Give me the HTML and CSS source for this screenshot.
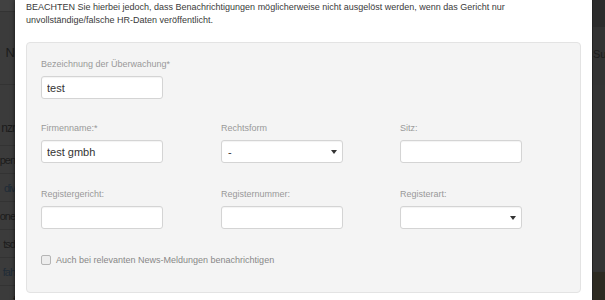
FILE: index.html
```html
<!DOCTYPE html>
<html lang="de">
<head>
    <meta charset="UTF-8">
    <meta name="viewport" content="width=device-width, initial-scale=1.0">
    <title>Überwachung anlegen</title>
    <link rel="stylesheet" href="styles.css">
</head>
<body>

    <div class="screen">
        <!-- Hintergrund links (abgedunkelte Tabelle) -->
        <div class="backdrop backdrop-left">
            <div class="bg-row bg-top"></div>
            <div class="bg-row bg-head"><span>N</span></div>
            <div class="bg-row bg-tall"><span>nzr</span></div>
            <div class="bg-row"><span>pen</span></div>
            <div class="bg-row link"><span>div</span></div>
            <div class="bg-row"><span>one</span></div>
            <div class="bg-row"><span>tsd</span></div>
            <div class="bg-row link"><span>fah</span></div>
            <div class="bg-row"><span>f</span></div>
        </div>

        <!-- Modal -->
        <div class="modal">
            <p class="hint">BEACHTEN Sie hierbei jedoch, dass Benachrichtigungen möglicherweise nicht ausgelöst werden, wenn das Gericht nur<br>unvollständige/falsche HR-Daten veröffentlicht.</p>

            <form class="well">
                <div class="field">
                    <label for="bezeichnung">Bezeichnung der Überwachung*</label>
                    <input type="text" id="bezeichnung" value="test">
                </div>

                <div class="grid">
                    <div class="field">
                        <label for="firma">Firmenname:*</label>
                        <input type="text" id="firma" value="test gmbh">
                    </div>
                    <div class="field">
                        <label for="rechtsform">Rechtsform</label>
                        <div class="select-wrap">
                            <select id="rechtsform"><option>-</option></select>
                        </div>
                    </div>
                    <div class="field">
                        <label for="sitz">Sitz:</label>
                        <input type="text" id="sitz">
                    </div>

                    <div class="field">
                        <label for="gericht">Registergericht:</label>
                        <input type="text" id="gericht">
                    </div>
                    <div class="field">
                        <label for="nummer">Registernummer:</label>
                        <input type="text" id="nummer">
                    </div>
                    <div class="field">
                        <label for="art">Registerart:</label>
                        <div class="select-wrap">
                            <select id="art"><option></option></select>
                        </div>
                    </div>
                </div>

                <label class="check"><input type="checkbox"> Auch bei relevanten News-Meldungen benachrichtigen</label>
            </form>
        </div>

        <!-- Hintergrund rechts -->
        <div class="backdrop backdrop-right">
            <div class="bg-row bg-top-r"></div>
            <div class="bg-row bg-head-r"><span>Su</span></div>
            <div class="bg-row bg-body-r"></div>
            <div class="bg-row bg-foot-r"></div>
        </div>
    </div>

</body>
</html>
```

FILE: styles.css
```css
* { margin: 0; padding: 0; box-sizing: border-box; }
body { background: #3a3a3a; font-family: "Liberation Sans", Arial, sans-serif; height: 300px; overflow: hidden; }
.screen { display: flex; height: 300px; }

/* abgedunkelter Hintergrund */
.backdrop { overflow: hidden; display: flex; flex-direction: column; font-size: 11px; color: #1c1c1c; }
.backdrop-left { width: 15px; background: #3b3b3b; }
.bg-row { flex: none; height: 28px; border-bottom: 1px solid #333; display: flex; align-items: center; justify-content: flex-end; white-space: nowrap; letter-spacing: -1px; }
.bg-row.link { color: #1f2b37; }
.bg-top { height: 12px; background: #414141; }
.bg-head { height: 73px; padding-top: 9px; font-size: 13px; padding-right: 1px; }
.bg-tall { height: 61px; align-items: flex-end; padding-bottom: 10px; font-size: 12px; }

.backdrop-right { width: 13px; background: #333; border-left: 1px solid #222; }
.bg-top-r { height: 28px; background: #2c2c2c; }
.bg-head-r { height: 57px; align-items: flex-start; justify-content: flex-start; padding-top: 20px; letter-spacing: 0; }
.bg-body-r { height: 187px; background: #343434; }
.bg-foot-r { flex: 1; background: #2d2a22; border-bottom: none; }

/* Modal */
.modal { width: 577px; background: #fff; box-shadow: 0 0 4px rgba(0, 0, 0, 0.7); padding: 1px 11px 0; }
.hint { font-size: 9px; line-height: 13px; color: #3a3a3a; }
.well { margin-top: 15px; height: 251px; background: #f4f4f4; border: 1px solid #e3e3e3; border-radius: 4px; padding: 15px 14px 0; }

.field { display: flex; flex-direction: column; gap: 6px; }
.field label { font-size: 9px; line-height: 12px; color: #999; }
.field input, .field select { width: 122px; height: 23px; border: 1px solid #d4d4d4; border-radius: 3px; background: #fff; font-family: inherit; font-size: 11px; color: #333; padding: 0 5px; outline: none; box-shadow: inset 0 1px 1px rgba(0, 0, 0, 0.05); }

.grid { display: grid; grid-template-columns: 180px 179px 1fr; row-gap: 25px; margin-top: 23px; }

.select-wrap { position: relative; width: 122px; }
.select-wrap select { appearance: none; -webkit-appearance: none; padding-left: 6px; }
.select-wrap::after { content: ""; position: absolute; right: 6px; top: 10px; border-left: 3px solid transparent; border-right: 3px solid transparent; border-top: 4px solid #333; pointer-events: none; }

.check { display: flex; align-items: center; gap: 5px; margin-top: 26px; font-size: 9px; color: #888; }
.check input { appearance: none; -webkit-appearance: none; width: 10px; height: 10px; border: 1px solid #b5b5b5; border-radius: 2px; background: #ededed; }
```
